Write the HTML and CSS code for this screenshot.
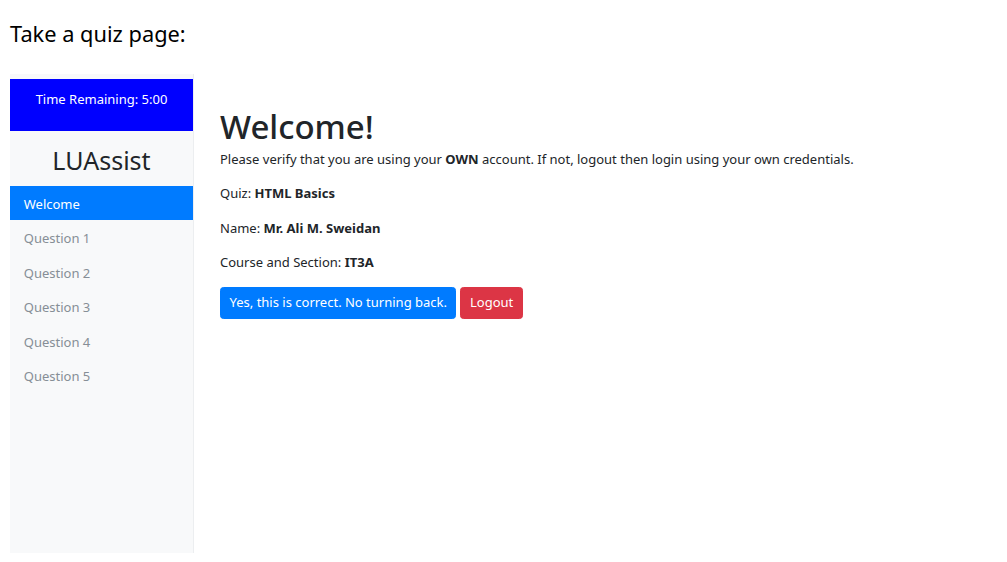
FILE: index.html
```html
<!DOCTYPE html>
<html lang="en">
<head>
<meta charset="utf-8">
<title>Take a quiz page</title>
<link rel="stylesheet" href="styles.css">
</head>
<body>
<div class="page">
  <h2 class="page-title">Take a quiz page:</h2>
  <div class="wrapper">
    <aside class="sidebar">
      <div class="timer">Time Remaining: 5:00</div>
      <div class="sidebar-heading">LUAssist</div>
      <nav class="nav">
        <a class="nav-link active" href="#">Welcome</a>
        <a class="nav-link" href="#">Question 1</a>
        <a class="nav-link" href="#">Question 2</a>
        <a class="nav-link" href="#">Question 3</a>
        <a class="nav-link" href="#">Question 4</a>
        <a class="nav-link" href="#">Question 5</a>
      </nav>
    </aside>
    <main class="content">
      <h1 class="title">Welcome!</h1>
      <p>Please verify that you are using your <b>OWN</b> account. If not, logout then login using your own credentials.</p>
      <p>Quiz: <b>HTML Basics</b></p>
      <p>Name: <b>Mr. Ali M. Sweidan</b></p>
      <p>Course and Section: <b>IT3A</b></p>
      <div class="actions">
        <button class="btn btn-primary" type="button">Yes, this is correct. No turning back.</button>
        <button class="btn btn-danger" type="button">Logout</button>
      </div>
    </main>
  </div>
</div>
</body>
</html>
```
FILE: styles.css
```css
* { box-sizing: border-box; }
html, body { margin: 0; padding: 0; background: #fff; }
body {
  font-family: "Noto Sans", "Open Sans", sans-serif;
  font-size: 13px;
  line-height: 20.6px;
  color: #212529;
}
.page { padding: 0 10px; }
.page-title {
  font-family: "Noto Sans", sans-serif;
  font-weight: 400;
  font-size: 21.8px;
  line-height: 30px;
  margin: 0;
  padding: 19px 0 25px;
  color: #000;
}
.wrapper { display: flex; align-items: flex-start; }
.sidebar {
  width: 184px;
  height: 479px;
  flex: none;
  background: #f8f9fa;
  border-right: 1px solid #eceef0;
  padding-top: 5px;
}
.timer {
  background: #0000ff;
  color: #fff;
  height: 52px;
  text-align: center;
  padding-top: 10px;
}
.sidebar-heading {
  font-size: 25px;
  line-height: 30px;
  text-align: center;
  padding: 14px 0 11px;
  font-weight: 400;
}
.nav { display: flex; flex-direction: column; }
.nav-link {
  display: block;
  padding: 8px 13.75px 5.8px;
  color: #868e96;
  text-decoration: none;
}
.nav-link.active { background: #007bff; color: #fff; }
.content { padding: 32px 0 0 26px; flex: 1; }
.title {
  font-size: 33px;
  font-weight: 500;
  line-height: 41px;
  margin: 0 0 2px;
}
.content p { margin: 0 0 13.8px; }
.content b { font-weight: 700; }
.actions { display: flex; gap: 4px; }
.btn {
  font-family: inherit;
  font-size: 13px;
  line-height: 20.6px;
  border: 1px solid transparent;
  border-radius: 3.4px;
  padding: 4.3px 8.5px 5.1px;
  color: #fff;
  cursor: pointer;
}
.btn-primary { background: #007bff; border-color: #007bff; }
.btn-danger { background: #dc3545; border-color: #dc3545; }
```
